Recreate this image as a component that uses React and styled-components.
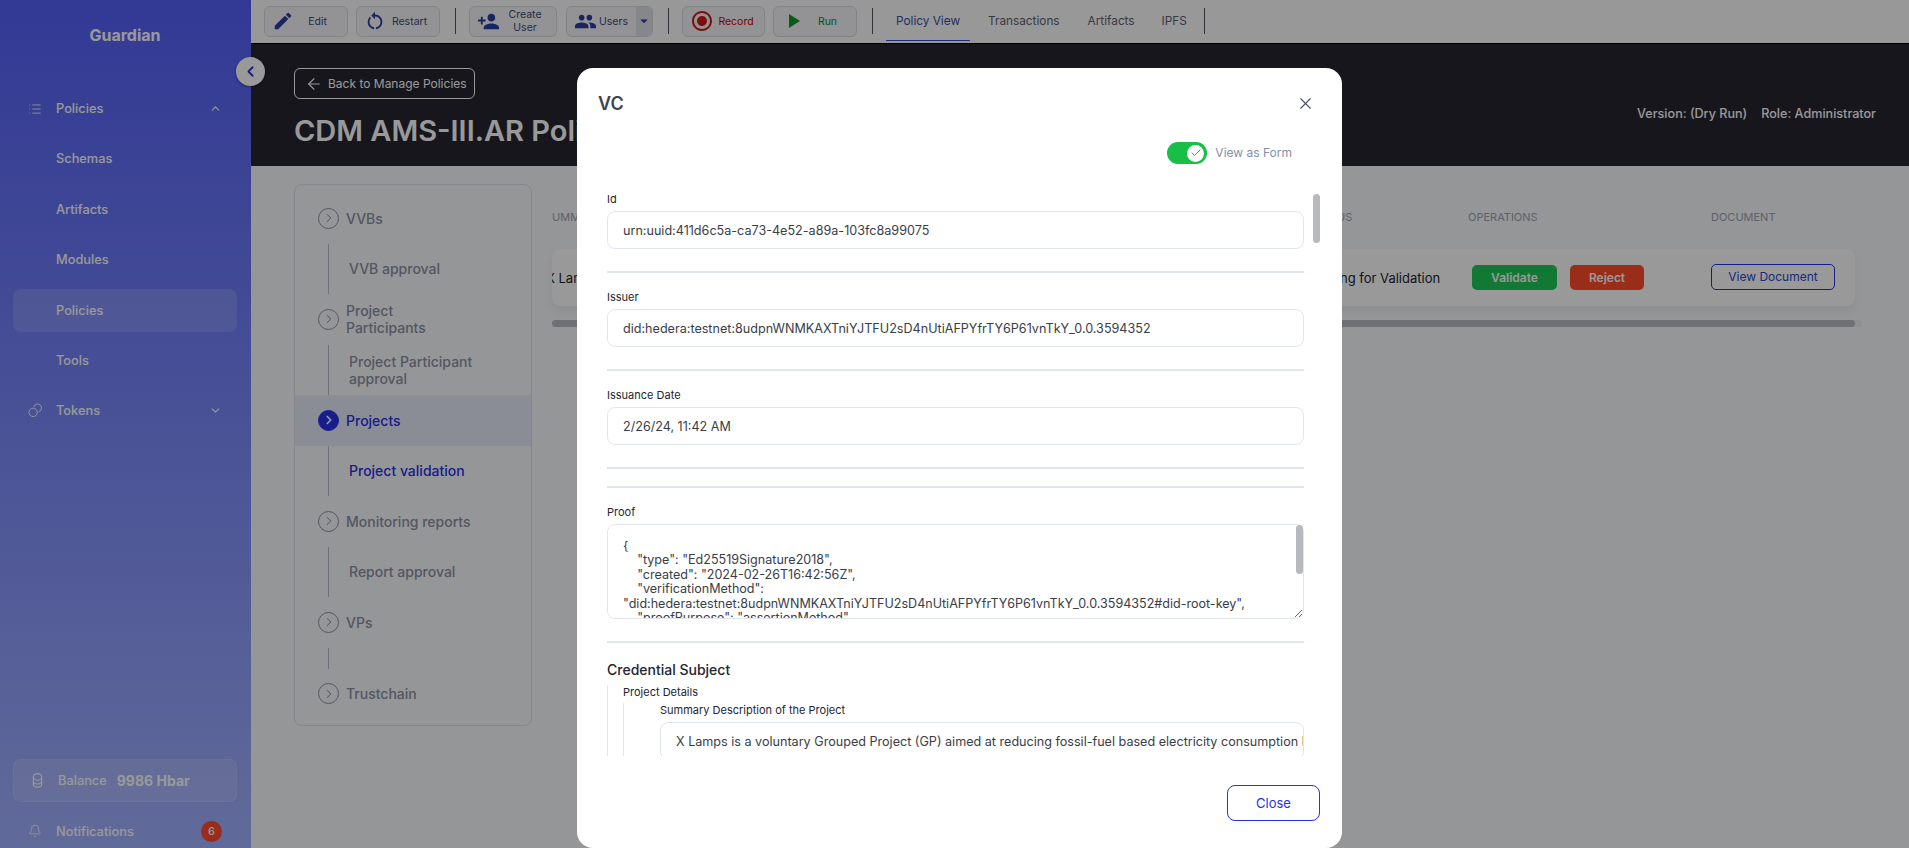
import React from 'react'
import styled, { createGlobalStyle } from 'styled-components'
import {
  MdEdit, MdRestartAlt, MdPersonAdd, MdPeople, MdArrowDropDown,
  MdRadioButtonChecked, MdPlayArrow,
} from 'react-icons/md'
import { List, ChevronUp, ChevronDown, ChevronLeft, ChevronRight, ArrowLeft, Bell, X, Check } from 'lucide-react'

const GlobalStyle = createGlobalStyle`
  html, body { margin: 0; padding: 0; height: 100%; overflow: hidden; }
  body { font-family: Inter, "Liberation Sans", sans-serif; }
  * { box-sizing: border-box; }
`

const Page = styled.div`
  position: relative;
  display: grid;
  grid-template-columns: 251px 1fr;
  width: 1909px;
  height: 848px;
  overflow: hidden;
  background: #f9fafc;
`

/* sidebar */
const Sidebar = styled.aside`
  display: flex;
  flex-direction: column;
  padding: 0 14px 0 13px;
  background: linear-gradient(180deg, #5360f8 0%, #a2b2ff 100%);
  color: #fff;
`
const Brand = styled.div`
  height: 87px;
  padding-top: 26px;
  text-align: center;
  font-size: 16px;
  line-height: 18px;
  font-weight: 700;
  color: #fff;
`
const Nav = styled.nav`
  display: flex;
  flex-direction: column;
  gap: 7.4px;
`
const NavItem = styled.div`
  display: flex;
  align-items: center;
  height: 43px;
  padding: 0 15px 0 15px;
  border-radius: 8px;
  font-size: 12.8px;
  font-weight: 500;
  background: ${p => (p.$active ? 'rgba(255,255,255,0.15)' : 'transparent')};
`
const NavIcon = styled.span`
  display: flex;
  justify-content: center;
  width: 14px;
  margin-right: 14px;
  flex: none;
`
const NavLabel = styled.span`
  flex: 1;
  padding-left: ${p => (p.$plain ? '28px' : '0')};
`
const Balance = styled.div`
  display: flex;
  align-items: center;
  height: 43px;
  margin-top: auto;
  padding: 0 0 0 16px;
  border-radius: 8px;
  border: 1px solid rgba(255,255,255,0.12);
  background: rgba(255,255,255,0.13);
  font-size: 12.8px;
  font-weight: 500;
`
const BalanceValue = styled.b`
  margin-left: 10px;
  font-size: 14px;
  font-weight: 700;
`
const Notifications = styled(NavItem)`
  margin: 8px 0 0;
  height: 38px;
  padding-top: 4px;
  padding-right: 15px;
`
const Badge = styled.span`
  display: flex;
  align-items: center;
  justify-content: center;
  width: 21px;
  height: 21px;
  border-radius: 50%;
  background: #ff4a30;
  font-size: 11px;
`
const Collapse = styled.button`
  position: absolute;
  left: 236px;
  top: 57px;
  display: flex;
  align-items: center;
  justify-content: center;
  width: 29px;
  height: 29px;
  padding: 0;
  border: none;
  border-radius: 50%;
  background: #fff;
  color: #2b37c9;
  box-shadow: 0 1px 3px rgba(0,0,0,0.35);
`

/* toolbar */
const Main = styled.main`
  display: flex;
  flex-direction: column;
  min-width: 0;
`
const Toolbar = styled.div`
  display: flex;
  align-items: center;
  height: 43px;
  padding: 0 0 0 13px;
  background: #fdfdfd;
`
const ToolButton = styled.div`
  display: flex;
  align-items: center;
  width: ${p => p.$w}px;
  height: 31px;
  margin-right: ${p => p.$mr || 8}px;
  margin-top: -1px;
  padding-left: 7px;
  border: 1px solid #d8dae0;
  border-radius: 6px;
  background: #f5f6f8;
  font-size: 10.5px;
  line-height: 13px;
  color: ${p => p.$color || '#3c4a78'};
  svg { flex: none; color: ${p => p.$icon || '#2c3f9e'}; }
`
const ToolText = styled.span`
  flex: 1;
  text-align: center;
  padding-right: 6px;
`
const DropPart = styled.span`
  display: flex;
  align-items: center;
  justify-content: center;
  align-self: stretch;
  width: 16px;
  margin-left: auto;
  background: #dfe1e6;
  border-radius: 0 5px 5px 0;
`
const ToolDivider = styled.span`
  width: 1px;
  height: 26px;
  margin: -1px 13px 0 7px;
  background: #55575f;
`
const Tab = styled.div`
  display: flex;
  align-items: center;
  justify-content: center;
  height: 38px;
  padding: 0 10px;
  margin-right: ${p => p.$mr || 0}px;
  border-bottom: 1px solid ${p => (p.$active ? '#3b4fc4' : 'transparent')};
  font-size: 11.8px;
  font-weight: 400;
  color: ${p => (p.$active ? '#3b4fa0' : '#5d6170')};
`

/* header */
const Header = styled.header`
  display: flex;
  align-items: flex-start;
  justify-content: space-between;
  height: 123px;
  padding: 24px 33px 0 43px;
  border-top: 1px solid #000;
  background: #25262f;
  color: #fff;
`
const BackButton = styled.div`
  display: flex;
  align-items: center;
  width: 181px;
  height: 31px;
  padding-left: 10px;
  border: 1px solid #fff;
  border-radius: 6px;
  font-size: 12px;
  gap: 5px;
`
const Title = styled.h1`
  margin: 13px 0 0 0;
  font-size: 29px;
  line-height: 38px;
  font-weight: 600;
  white-space: nowrap;
`
const Meta = styled.div`
  display: flex;
  gap: 14px;
  margin-top: 38px;
  font-size: 12.6px;
  line-height: 16px;
  font-weight: 500;
`

/* page content */
const Content = styled.div`
  display: flex;
  align-items: flex-start;
  padding: 18px 47px 0 43px;
`
const StepCard = styled.div`
  flex: none;
  width: 238px;
  padding: 8px 0 6px;
  border: 1px solid #dde0ea;
  border-radius: 8px;
`
const StepRow = styled.div`
  display: flex;
  align-items: center;
  gap: 7px;
  height: 50.5px;
  padding-left: 23px;
  font-size: 14px;
  line-height: 17px;
  font-weight: 500;
  color: ${p => (p.$active ? '#2a2fe8' : '#8a90a4')};
  background: ${p => (p.$active ? '#e6ecf8' : 'transparent')};
`
const StepIcon = styled.span`
  display: flex;
  align-items: center;
  justify-content: center;
  flex: none;
  width: 21px;
  height: 21px;
  border-radius: 50%;
  border: 1px solid ${p => (p.$active ? '#2a2fe8' : '#8a90a4')};
  background: ${p => (p.$active ? '#2a2fe8' : 'transparent')};
  color: ${p => (p.$active ? '#fff' : '#7d8398')};
`
const StepChild = styled.div`
  display: flex;
  align-items: center;
  height: ${p => p.$h || 50.5}px;
  position: relative;
  padding-left: 54px;
  font-size: 14px;
  line-height: 17px;
  font-weight: 500;
  color: ${p => (p.$active ? '#2a2fe8' : '#8a90a4')};
  &::before {
    content: '';
    position: absolute;
    left: 33px;
    top: 0;
    bottom: 0;
    width: 1px;
    background: #b8bdcc;
  }
`
const TableArea = styled.div`
  flex: 1;
  min-width: 0;
  margin-left: 20px;
`
const Columns = styled.div`
  display: grid;
  grid-template-columns: 758px 158px 243px 1fr;
  align-items: center;
  width: 1303px;
  overflow: hidden;
`
const HeadRow = styled(Columns)`
  height: 65px;
  font-size: 11px;
  font-weight: 400;
  color: #9ea1ae;
`
const BodyRow = styled(Columns)`
  height: 57px;
  border-radius: 8px;
  background: #fff;
  box-shadow: 0 5px 10px rgba(0,0,0,0.06);
  font-size: 13px;
  color: #23252f;
`
const Clipped = styled.span`
  margin-left: ${p => p.$by}px;
`
const ActionCell = styled.div`
  display: flex;
  gap: 13px;
  padding-left: 4px;
`
const ActionButton = styled.div`
  display: flex;
  align-items: center;
  justify-content: center;
  width: ${p => p.$w}px;
  height: 25px;
  border-radius: 5px;
  background: ${p => p.$bg};
  color: #fff;
  font-size: 12px;
  font-weight: 600;
`
const OutlineButton = styled.div`
  display: flex;
  align-items: center;
  justify-content: center;
  width: 124px;
  height: 26px;
  margin-top: -2px;
  border: 1px solid #2633e0;
  border-radius: 5px;
  color: #3048c8;
  font-size: 12px;
`
const HScrollTrack = styled.div`
  width: 1310px;
  height: 7px;
  margin-top: 14px;
  background: #f0f1f4;
  border-radius: 4px;
`
const HScrollThumb = styled.div`
  width: 1303px;
  height: 7px;
  border-radius: 4px;
  background: #b9bbc0;
`

/* modal */
const Backdrop = styled.div`
  position: absolute;
  inset: 0;
  background: rgba(0,0,0,0.4);
`
const Modal = styled.div`
  position: absolute;
  left: 577px;
  top: 68px;
  display: flex;
  flex-direction: column;
  width: 765px;
  height: 780px;
  border-radius: 16px;
  background: #fff;
  color: #23252f;
`
const ModalHead = styled.div`
  display: flex;
  align-items: center;
  justify-content: space-between;
  flex: none;
  height: 70px;
  padding: 0 27px 0 21px;
`
const ModalTitle = styled.h2`
  margin: 0;
  font-size: 18px;
  font-weight: 600;
  color: #3d4454;
`
const ToggleRow = styled.div`
  display: flex;
  align-items: flex-start;
  justify-content: flex-end;
  gap: 8px;
  flex: none;
  height: 54px;
  padding: 4px 50px 0 0;
  font-size: 12px;
  color: #848fa9;
  line-height: 22px;
`
const ToggleTrack = styled.div`
  display: flex;
  align-items: center;
  justify-content: flex-end;
  width: 40px;
  height: 22px;
  padding-right: 3px;
  border-radius: 11px;
  background: #19be47;
`
const ToggleThumb = styled.div`
  display: flex;
  align-items: center;
  justify-content: center;
  width: 17px;
  height: 17px;
  border-radius: 50%;
  background: #fff;
  color: #19be47;
`
const ModalBody = styled.div`
  flex: 1;
  min-height: 0;
  margin: 0 38px 0 30px;
  overflow: hidden;
`
const ModalThumb = styled.div`
  position: absolute;
  left: 736px;
  top: 126px;
  width: 7px;
  height: 49px;
  border-radius: 4px;
  background: #b7b9be;
`
const Field = styled.div`
  padding-bottom: 22px;
`
const Label = styled.div`
  margin-bottom: 5px;
  font-size: 11px;
  line-height: 14px;
  font-weight: 400;
  color: #23252f;
`
const Input = styled.div`
  display: flex;
  align-items: center;
  height: 38px;
  padding: 0 15px;
  border: 1px solid #e1e5ef;
  border-radius: 8px;
  font-size: 12.6px;
  color: #3a3d47;
  white-space: nowrap;
  overflow: hidden;
`
const Rule = styled.hr`
  height: 2px;
  margin: 0 0 17px;
  border: none;
  background: #e1e5ef;
`
const JsonWrap = styled.div`
  position: relative;
  height: 95px;
`
const JsonArea = styled.textarea`
  display: block;
  width: 100%;
  height: 95px;
  padding: 14px 15px 0;
  border: 1px solid #e1e5ef;
  border-radius: 8px;
  font-family: Inter, "Liberation Sans", sans-serif;
  font-size: 12.55px;
  line-height: 14.4px;
  color: #3a3d47;
  outline: none;
  resize: vertical;
`
const JsonThumb = styled.div`
  position: absolute;
  right: 1px;
  top: 1px;
  width: 7px;
  height: 49px;
  border-radius: 4px;
  background: #b7b9be;
`
const SubjectTitle = styled.h3`
  margin: 0 0 6px;
  padding-top: 1px;
  font-size: 14px;
  line-height: 18px;
  font-weight: 500;
`
const Nest = styled.div`
  padding-left: ${p => p.$pad}px;
  border-left: 1px solid #e1e5ef;
`
const NestLabel = styled.div`
  font-size: 11px;
  line-height: 14px;
  font-weight: 400;
  margin-bottom: ${p => p.$mb || 0}px;
`
const ModalFoot = styled.div`
  display: flex;
  justify-content: flex-end;
  flex: none;
  height: 92px;
  padding: 29px 22px 0 0;
`
const CloseButton = styled.button`
  width: 93px;
  height: 36px;
  border: 1px solid #2633e0;
  border-radius: 8px;
  background: #fff;
  color: #2633e0;
  font-family: inherit;
  font-size: 13px;
`

const proof = `{
    "type": "Ed25519Signature2018",
    "created": "2024-02-26T16:42:56Z",
    "verificationMethod": "did:hedera:testnet:8udpnWNMKAXTniYJTFU2sD4nUtiAFPYfrTY6P61vnTkY_0.0.3594352#did-root-key",
    "proofPurpose": "assertionMethod",
    "jws": "eyJhbGciOiJFZERTQSIsImI2NCI6ZmFsc2UsImNyaXQiOlsiYjY0Il19..7kXq2mB"
}`

const TokensIcon = () => (
  <svg width="15" height="15" viewBox="0 0 15 15" fill="none" stroke="currentColor" strokeWidth="1">
    <circle cx="5.5" cy="9.5" r="4.5" />
    <path d="M6.3 3.4a4.2 4.2 0 1 1 5.2 5.4" />
  </svg>
)
const CoinsIcon = () => (
  <svg width="11" height="15" viewBox="0 0 11 15" fill="none" stroke="currentColor" strokeWidth="1.1">
    <ellipse cx="5.5" cy="4" rx="4.2" ry="3.4" />
    <path d="M1.3 4v7c0 1.9 1.9 3.2 4.2 3.2s4.2-1.3 4.2-3.2V4M1.3 7.8c0 1.9 1.9 3.2 4.2 3.2s4.2-1.3 4.2-3.2" />
  </svg>
)

const Step = ({ active, children }) => (
  <StepRow $active={active}>
    <StepIcon $active={active}><ChevronRight size={14} strokeWidth={active ? 3 : 1.7} /></StepIcon>
    <span>{children}</span>
  </StepRow>
)

const TextField = ({ label, value }) => (
  <>
    <Field>
      <Label>{label}</Label>
      <Input>{value}</Input>
    </Field>
    <Rule />
  </>
)

export default function App() {
  return (
    <Page>
      <GlobalStyle />
      <Sidebar>
        <Brand>Guardian</Brand>
        <Nav>
          <NavItem>
            <NavIcon><List size={14} strokeWidth={1.4} /></NavIcon>
            <NavLabel>Policies</NavLabel>
            <ChevronUp size={13} />
          </NavItem>
          <NavItem><NavLabel $plain>Schemas</NavLabel></NavItem>
          <NavItem><NavLabel $plain>Artifacts</NavLabel></NavItem>
          <NavItem><NavLabel $plain>Modules</NavLabel></NavItem>
          <NavItem $active><NavLabel $plain>Policies</NavLabel></NavItem>
          <NavItem><NavLabel $plain>Tools</NavLabel></NavItem>
          <NavItem>
            <NavIcon><TokensIcon /></NavIcon>
            <NavLabel>Tokens</NavLabel>
            <ChevronDown size={13} />
          </NavItem>
        </Nav>
        <Balance>
          <NavIcon><CoinsIcon /></NavIcon>
          Balance
          <BalanceValue>9986 Hbar</BalanceValue>
        </Balance>
        <Notifications>
          <NavIcon><Bell size={14} strokeWidth={1.4} /></NavIcon>
          <NavLabel>Notifications</NavLabel>
          <Badge>6</Badge>
        </Notifications>
      </Sidebar>
      <Main>
        <Toolbar>
          <ToolButton $w={84}><MdEdit size={22} /><ToolText>Edit</ToolText></ToolButton>
          <ToolButton $w={84}><MdRestartAlt size={22} /><ToolText>Restart</ToolText></ToolButton>
          <ToolDivider />
          <ToolButton $w={88} $mr={9}><MdPersonAdd size={23} /><ToolText>Create User</ToolText></ToolButton>
          <ToolButton $w={87}>
            <MdPeople size={23} /><ToolText>Users</ToolText>
            <DropPart><MdArrowDropDown size={18} /></DropPart>
          </ToolButton>
          <ToolDivider />
          <ToolButton $w={83} $color="#cc0000" $icon="#d01818"><MdRadioButtonChecked size={24} /><ToolText>Record</ToolText></ToolButton>
          <ToolButton $w={84} $color="#0c8a2c" $icon="#0c9a2c"><MdPlayArrow size={24} /><ToolText>Run</ToolText></ToolButton>
          <ToolDivider />
          <Tab $active $mr={8}>Policy View</Tab>
          <Tab $mr={8}>Transactions</Tab>
          <Tab $mr={7}>Artifacts</Tab>
          <Tab>IPFS</Tab>
          <ToolDivider />
        </Toolbar>
        <Header>
          <div>
            <BackButton><ArrowLeft size={18} strokeWidth={1.5} />Back to Manage Policies</BackButton>
            <Title>CDM AMS-III.AR Policy</Title>
          </div>
          <Meta><span>Version: (Dry Run)</span><span>Role: Administrator</span></Meta>
        </Header>
        <Content>
          <StepCard>
            <Step>VVBs</Step>
            <StepChild>VVB approval</StepChild>
            <Step>Project<br />Participants</Step>
            <StepChild>Project Participant<br />approval</StepChild>
            <Step active>Projects</Step>
            <StepChild $active>Project validation</StepChild>
            <Step>Monitoring reports</Step>
            <StepChild>Report approval</StepChild>
            <Step>VPs</Step>
            <StepChild $h={21} />
            <Step>Trustchain</Step>
          </StepCard>
          <TableArea>
            <HeadRow>
              <Clipped $by={-7}>SUMMARY</Clipped>
              <span>STATUS</span>
              <span>OPERATIONS</span>
              <span>DOCUMENT</span>
            </HeadRow>
            <BodyRow>
              <Clipped $by={-6}>X Lamps</Clipped>
              <span>Waiting for Validation</span>
              <ActionCell>
                <ActionButton $w={85} $bg="#1fc858">Validate</ActionButton>
                <ActionButton $w={74} $bg="#ff4b2c">Reject</ActionButton>
              </ActionCell>
              <OutlineButton>View Document</OutlineButton>
            </BodyRow>
            <HScrollTrack><HScrollThumb /></HScrollTrack>
          </TableArea>
        </Content>
      </Main>
      <Collapse><ChevronLeft size={17} strokeWidth={2.5} /></Collapse>
      <Backdrop>
        <Modal>
          <ModalHead>
            <ModalTitle>VC</ModalTitle>
            <X size={19} strokeWidth={1.4} color="#4a5060" />
          </ModalHead>
          <ToggleRow>
            <ToggleTrack><ToggleThumb><Check size={12} strokeWidth={2} /></ToggleThumb></ToggleTrack>
            View as Form
          </ToggleRow>
          <ModalBody>
            <TextField label="Id" value="urn:uuid:411d6c5a-ca73-4e52-a89a-103fc8a99075" />
            <TextField label="Issuer" value="did:hedera:testnet:8udpnWNMKAXTniYJTFU2sD4nUtiAFPYfrTY6P61vnTkY_0.0.3594352" />
            <TextField label="Issuance Date" value="2/26/24, 11:42 AM" />
            <Rule />
            <Field>
              <Label>Proof</Label>
              <JsonWrap>
                <JsonArea readOnly value={proof} />
                <JsonThumb />
              </JsonWrap>
            </Field>
            <Rule />
            <SubjectTitle>Credential Subject</SubjectTitle>
            <Nest $pad={15}>
              <NestLabel $mb={4}>Project Details</NestLabel>
              <Nest $pad={36}>
                <NestLabel $mb={5}>Summary Description of the Project</NestLabel>
                <Input>X Lamps is a voluntary Grouped Project (GP) aimed at reducing fossil-fuel based electricity consumption by distributing energy efficient lamps</Input>
              </Nest>
            </Nest>
          </ModalBody>
          <ModalThumb />
          <ModalFoot>
            <CloseButton>Close</CloseButton>
          </ModalFoot>
        </Modal>
      </Backdrop>
    </Page>
  )
}
